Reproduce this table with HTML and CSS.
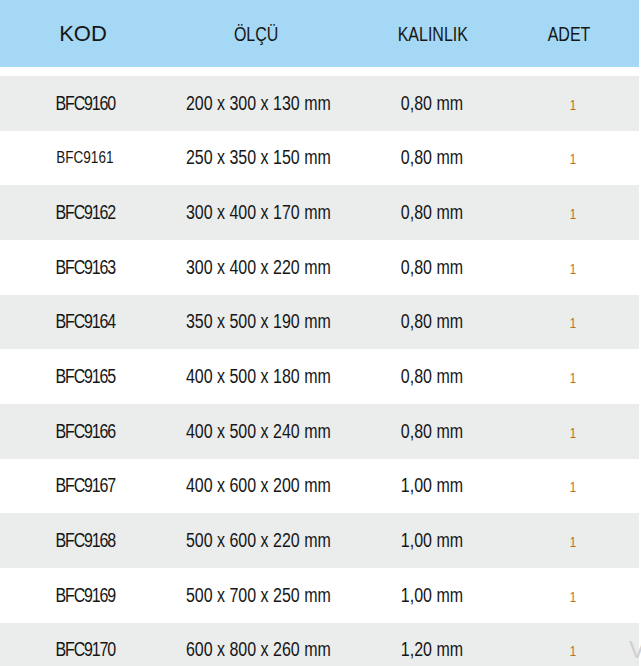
FILE: index.html
```html
<!DOCTYPE html>
<html lang="tr">
<head>
<meta charset="utf-8">
<title>Ölçü Tablosu</title>
<link rel="stylesheet" href="styles.css">
</head>
<body>
<div class="table">
  <div class="head">
    <div class="hcell kod"><span>KOD</span></div>
    <div class="hcell"><span class="n">ÖLÇÜ</span></div>
    <div class="hcell"><span class="n">KALINLIK</span></div>
    <div class="hcell"><span class="n">ADET</span></div>
  </div>
  <div class="row gray"><div class="code"><span class="n">BFC9160</span></div><div class="cell"><span class="n">200 x 300 x 130 mm</span></div><div class="cell"><span class="n">0,80 mm</span></div><div class="qty"><span class="n">1</span></div></div>
  <div class="row"><div class="code small"><span class="n">BFC9161</span></div><div class="cell"><span class="n">250 x 350 x 150 mm</span></div><div class="cell"><span class="n">0,80 mm</span></div><div class="qty"><span class="n">1</span></div></div>
  <div class="row gray"><div class="code"><span class="n">BFC9162</span></div><div class="cell"><span class="n">300 x 400 x 170 mm</span></div><div class="cell"><span class="n">0,80 mm</span></div><div class="qty"><span class="n">1</span></div></div>
  <div class="row"><div class="code"><span class="n">BFC9163</span></div><div class="cell"><span class="n">300 x 400 x 220 mm</span></div><div class="cell"><span class="n">0,80 mm</span></div><div class="qty"><span class="n">1</span></div></div>
  <div class="row gray"><div class="code"><span class="n">BFC9164</span></div><div class="cell"><span class="n">350 x 500 x 190 mm</span></div><div class="cell"><span class="n">0,80 mm</span></div><div class="qty"><span class="n">1</span></div></div>
  <div class="row"><div class="code"><span class="n">BFC9165</span></div><div class="cell"><span class="n">400 x 500 x 180 mm</span></div><div class="cell"><span class="n">0,80 mm</span></div><div class="qty"><span class="n">1</span></div></div>
  <div class="row gray"><div class="code"><span class="n">BFC9166</span></div><div class="cell"><span class="n">400 x 500 x 240 mm</span></div><div class="cell"><span class="n">0,80 mm</span></div><div class="qty"><span class="n">1</span></div></div>
  <div class="row"><div class="code"><span class="n">BFC9167</span></div><div class="cell"><span class="n">400 x 600 x 200 mm</span></div><div class="cell"><span class="n">1,00 mm</span></div><div class="qty"><span class="n">1</span></div></div>
  <div class="row gray"><div class="code"><span class="n">BFC9168</span></div><div class="cell"><span class="n">500 x 600 x 220 mm</span></div><div class="cell"><span class="n">1,00 mm</span></div><div class="qty"><span class="n">1</span></div></div>
  <div class="row"><div class="code"><span class="n">BFC9169</span></div><div class="cell"><span class="n">500 x 700 x 250 mm</span></div><div class="cell"><span class="n">1,00 mm</span></div><div class="qty"><span class="n">1</span></div></div>
  <div class="row gray"><div class="code"><span class="n">BFC9170</span></div><div class="cell"><span class="n">600 x 800 x 260 mm</span></div><div class="cell"><span class="n">1,20 mm</span></div><div class="qty"><span class="n">1</span></div></div>
</div>
<span class="watermark">V</span>
</body>
</html>
```

FILE: styles.css
```css
html, body {
  margin: 0;
  padding: 0;
  background: #ffffff;
  overflow: hidden;
}
body {
  width: 641px;
  height: 666px;
  position: relative;
  font-family: "Liberation Sans", Arial, sans-serif;
  color: #161616;
}
.n {
  display: inline-block;
  white-space: nowrap;
  transform: scaleX(0.82);
  transform-origin: center;
}
.table {
  width: 639px;
}
.head {
  display: grid;
  grid-template-columns: 170px 172px 182px 91px 1fr;
  height: 67px;
  align-items: center;
  background: #a5d8f5;
  margin-bottom: 9px;
}
.hcell {
  text-align: center;
  font-size: 19.5px;
  padding-top: 1px;
  white-space: nowrap;
}
.hcell.kod {
  font-size: 22px;
  padding-top: 0;
  padding-right: 4px;
}
.row {
  display: grid;
  grid-template-columns: 170px 172px 182px 91px 1fr;
  height: 54.67px;
  align-items: center;
  background: #ffffff;
}
.row.gray {
  background: #ebecec;
}
.cell, .code {
  text-align: center;
  font-size: 19.5px;
  line-height: 20px;
  padding-bottom: 1px;
  white-space: nowrap;
}
.cell {
  padding-right: 2px;
}
.code .n {
  letter-spacing: -1.4px;
}
.code.small {
  font-size: 16.5px;
}
.code.small .n {
  letter-spacing: 0;
}
.qty {
  text-align: center;
  padding-left: 7px;
  padding-top: 3px;
  font-size: 14px;
  color: #b86f25;
}
.watermark {
  position: absolute;
  left: 629px;
  top: 636px;
  font-size: 24px;
  color: #d0d0d0;
}
```
